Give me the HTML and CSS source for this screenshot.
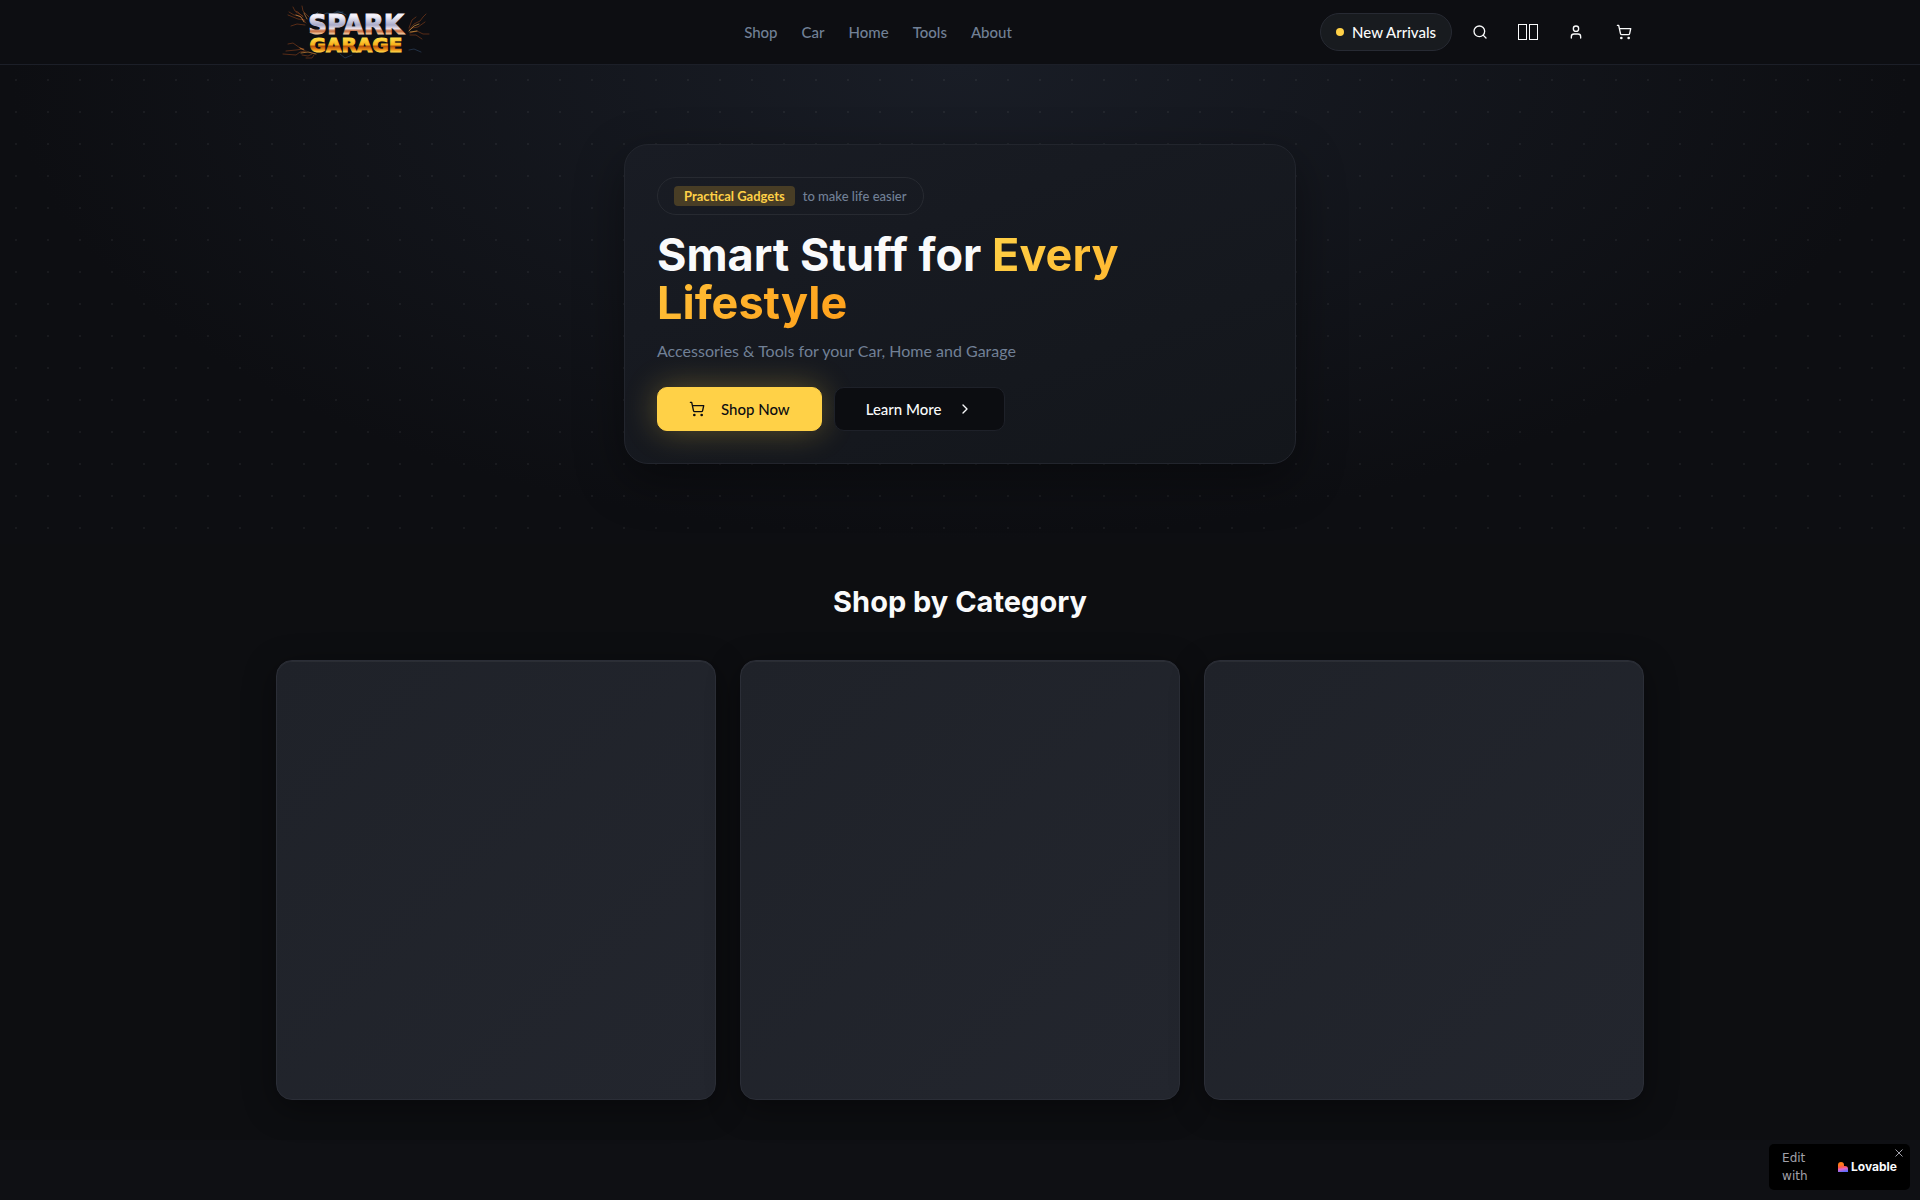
FILE: index.html
```
<!DOCTYPE html>
<html lang="en">
<head>
  <meta charset="UTF-8" />
  <meta name="viewport" content="width=device-width, initial-scale=1.0"/>
  <title>Spark Garage</title>
  <link rel="stylesheet" href="styles.css">
</head>
<body>
  <header class="header">
    <div class="container header-inner">
      <a class="logo" href="#" aria-label="Spark Garage">
        <svg width="160" height="56" viewBox="0 0 160 56">
          <defs>
            <linearGradient id="steel" x1="0" y1="0" x2="0" y2="1">
              <stop offset="0.2" stop-color="#f4f2fb"/>
              <stop offset="0.5" stop-color="#a9abc9"/>
              <stop offset="0.62" stop-color="#e9dfe6"/>
              <stop offset="0.7" stop-color="#c4693a"/>
              <stop offset="0.8" stop-color="#f3c9a0"/>
            </linearGradient>
            <linearGradient id="gold" x1="0" y1="0" x2="0" y2="1">
              <stop offset="0.2" stop-color="#ffe04a"/>
              <stop offset="0.48" stop-color="#f9b21c"/>
              <stop offset="0.56" stop-color="#b9560d"/>
              <stop offset="0.68" stop-color="#e98a14"/>
              <stop offset="0.8" stop-color="#ffd94a"/>
            </linearGradient>
          </defs>
          <g fill="none" stroke-linecap="round" stroke-width="0.6">
            <g stroke="#b5521f" opacity="0.75">
              <path d="M30 19L24 12L18 11L13 8M29 16L22 15L12 11M27 13L22 8L19 7L17 3M33 13L27 7L26 2M29 21L21 20L15 22M27 12L20 8"/>
              <path d="M133 26L138 20L144 17L147 13L150 10M134 29L141 27L147 30L153 30M136 24L142 23L149 18M133 24L136 16L140 13M134 31L140 31L146 35"/>
              <path d="M28 45L24 44L17 39L12 40M30 47L24 48L20 51L7 50M36 50L32 52L26 51M27 45L20 46L10 47M38 51L36 54L30 54"/>
            </g>
            <path stroke="#f0a050" d="M28 18L25 13L20 11M31 15L28 9"/>
            <path stroke="#3f6a93" opacity="0.8" d="M44 12L51 9L56 10L62 7L70 11M60 9L67 8M38 12L42 8"/>
            <path stroke="#f5b04a" d="M133 27L138 22L143 20M134 28L141 27"/>
            <path stroke="#f5a040" d="M40 50L32 48L25 49M28 46L24 44"/>
            <path stroke="#39577c" opacity="0.8" d="M133 46L138 45L145 48M64 50L69 54L76 51"/>
          </g>
          <text class="logo-top" x="80" y="30" text-anchor="middle" fill="url(#steel)" stroke="url(#steel)">SPARK</text>
          <text class="logo-bottom" x="80" y="48" text-anchor="middle" fill="url(#gold)" stroke="url(#gold)">GARAGE</text>
        </svg>
      </a>

      <nav class="nav">
        <a href="#">Shop</a>
        <a href="#">Car</a>
        <a href="#">Home</a>
        <a href="#">Tools</a>
        <a href="#">About</a>
      </nav>

      <div class="actions">
        <a class="arrivals" href="#"><span class="dot"></span>New Arrivals</a>
        <button class="icon-btn" aria-label="Search">
          <svg class="icon" viewBox="0 0 24 24"><circle cx="11" cy="11" r="8"/><path d="m21 21-4.3-4.3"/></svg>
        </button>
        <button class="icon-btn" aria-label="Region">
          <svg width="20" height="16" viewBox="0 0 20 16" fill="none" stroke="currentColor"><rect x="0.5" y="0.5" width="8" height="15"/><rect x="11.5" y="0.5" width="8" height="15"/></svg>
        </button>
        <button class="icon-btn" aria-label="Account">
          <svg class="icon" viewBox="0 0 24 24"><path d="M19 21v-2a4 4 0 0 0-4-4H9a4 4 0 0 0-4 4v2"/><circle cx="12" cy="7" r="4"/></svg>
        </button>
        <button class="icon-btn" aria-label="Cart">
          <svg class="icon" viewBox="0 0 24 24"><circle cx="8" cy="21" r="1"/><circle cx="19" cy="21" r="1"/><path d="M2.05 2.05h2l2.66 12.42a2 2 0 0 0 2 1.58h9.78a2 2 0 0 0 1.95-1.57l1.65-7.43H5.12"/></svg>
        </button>
      </div>
    </div>
  </header>

  <main>
    <section class="hero">
      <div class="hero-card">
        <div class="badge"><span class="badge-tag">Practical Gadgets</span>to make life easier</div>
        <h1>Smart Stuff for <span class="accent">Every Lifestyle</span></h1>
        <p>Accessories &amp; Tools for your Car, Home and Garage</p>
        <div class="buttons">
          <button class="btn btn-primary">
            <svg class="icon" viewBox="0 0 24 24"><circle cx="8" cy="21" r="1"/><circle cx="19" cy="21" r="1"/><path d="M2.05 2.05h2l2.66 12.42a2 2 0 0 0 2 1.58h9.78a2 2 0 0 0 1.95-1.57l1.65-7.43H5.12"/></svg>
            Shop Now
          </button>
          <button class="btn btn-dark">
            Learn More
            <svg class="icon" viewBox="0 0 24 24"><path d="m9 18 6-6-6-6"/></svg>
          </button>
        </div>
      </div>
    </section>

    <section class="categories">
      <div class="container">
        <h2>Shop by Category</h2>
        <div class="grid">
          <div class="category"></div>
          <div class="category"></div>
          <div class="category"></div>
        </div>
      </div>
    </section>
  </main>

  <aside class="edit-badge">
    <a href="#">
      <span class="edit-text">Edit with</span>
      <svg width="10" height="10" viewBox="0 0 10 10">
        <defs>
          <linearGradient id="heart" x1="0.3" y1="0" x2="0.5" y2="1">
            <stop offset="0.25" stop-color="#ff7a1a"/>
            <stop offset="0.5" stop-color="#ff5a4e"/>
            <stop offset="0.7" stop-color="#e065c8"/>
            <stop offset="1" stop-color="#5a6cff"/>
          </linearGradient>
        </defs>
        <path fill="url(#heart)" d="M0 3a3 3 0 0 1 6 0v1h1a3 3 0 0 1 3 3v3H0z"/>
      </svg>
      <span class="edit-brand">Lovable</span>
    </a>
    <button class="edit-close" aria-label="Close">
      <svg width="8" height="8" viewBox="0 0 8 8" stroke="currentColor"><path d="M0.5 0.5l7 7M7.5 0.5l-7 7"/></svg>
    </button>
  </aside>
</body>
</html>
```
FILE: styles.css
```
* {
  box-sizing: border-box;
}

body {
  margin: 0;
  min-height: 100vh;
  font-family: Lato, sans-serif;
  font-size: 16px;
  line-height: 24px;
  color: #f9fafb;
  background: #0f1014;
}

a {
  color: inherit;
  text-decoration: none;
}

button {
  font: inherit;
  color: inherit;
  cursor: pointer;
}

.container {
  max-width: 1400px;
  margin: 0 auto;
  padding: 0 16px;
}

.icon {
  width: 16px;
  height: 16px;
  fill: none;
  stroke: currentColor;
  stroke-width: 2;
  stroke-linecap: round;
  stroke-linejoin: round;
}

/* header */
.header {
  background: #0d0e12;
  box-shadow: 0 1px 0 #1c1f28;
  position: sticky;
  top: 0;
  z-index: 10;
}

.header-inner {
  display: flex;
  align-items: center;
  justify-content: space-between;
  height: 64px;
}

.logo svg {
  display: block;
}

.logo text {
  font-family: "DejaVu Sans", sans-serif;
  font-weight: bold;
  stroke-width: 1;
}

.logo-top {
  font-size: 26px;
}

.logo-bottom {
  font-size: 20px;
}

.nav {
  display: flex;
  gap: 24px;
  font-size: 15px;
  font-weight: 500;
  color: #718096;
}

.nav a:hover {
  color: #f9fafb;
}

.actions {
  display: flex;
  align-items: center;
  gap: 8px;
}

.arrivals {
  display: flex;
  align-items: center;
  gap: 8px;
  padding: 8px 15px;
  border: 1px solid #272a33;
  border-radius: 19px;
  background: #181b1f;
  font-size: 15px;
  font-weight: 500;
  line-height: 20px;
}

.dot {
  width: 8px;
  height: 8px;
  border-radius: 50%;
  background: #ffd147;
}

.icon-btn {
  display: flex;
  align-items: center;
  justify-content: center;
  width: 40px;
  height: 40px;
  padding: 0;
  border: none;
  border-radius: 10px;
  background: none;
}

/* hero */
.hero {
  padding: 80px 16px;
  background:
    radial-gradient(circle at 16px 16px, rgba(255, 255, 255, 0.05) 1px, transparent 1px) 0 0 / 32px 32px,
    radial-gradient(ellipse at top, #191d26 0%, #0d0e12 70%);
}

.hero-card {
  max-width: 672px;
  margin: 0 auto;
  padding: 32px;
  border: 1px solid #22252d;
  border-radius: 24px;
  background: linear-gradient(160deg, #191c24, #13161b);
  box-shadow: 0 16px 48px rgba(0, 0, 0, 0.4);
}

.badge {
  display: inline-flex;
  align-items: center;
  gap: 8px;
  padding: 8px 16px;
  border: 1px solid #272a31;
  border-radius: 19px;
  font-size: 13px;
  font-weight: 500;
  line-height: 20px;
  color: #718096;
}

.badge-tag {
  padding: 0 10px;
  border-radius: 4px;
  background: #483d25;
  color: #ffd147;
  font-weight: bold;
}

h1 {
  margin: 16px 0 12px;
  font-family: Inter, sans-serif;
  font-size: 45px;
  font-weight: 700;
  line-height: 48px;
}

.accent {
  background: linear-gradient(135deg, #ffd147, #ff9f1a);
  -webkit-background-clip: text;
  background-clip: text;
  color: transparent;
}

.hero-card p {
  margin: 0 0 24px;
  color: #718096;
}

.buttons {
  display: flex;
  flex-wrap: wrap;
  gap: 12px;
}

.btn {
  display: flex;
  align-items: center;
  gap: 16px;
  height: 44px;
  padding: 0 31px;
  border: 1px solid #1e2129;
  border-radius: 10px;
  font-size: 15px;
  font-weight: 500;
}

.btn-primary {
  border-color: #ffd147;
  background: #ffd147;
  color: #0c0d11;
  box-shadow: 0 0 32px rgba(255, 209, 71, 0.3);
}

.btn-dark {
  background: #0c0d11;
}

/* categories */
.categories {
  padding: 40px 0;
  background: #0d0e11;
}

h2 {
  margin: 0 0 40px;
  font-family: Inter, sans-serif;
  font-size: 29px;
  font-weight: 700;
  line-height: 36px;
  text-align: center;
}

.grid {
  display: grid;
  grid-template-columns: repeat(3, 1fr);
  gap: 24px;
}

.category {
  aspect-ratio: 1;
  border: 1px solid #2b2e37;
  border-radius: 16px;
  background: linear-gradient(135deg, #1f2229, #23262e);
  box-shadow: 0 8px 32px rgba(0, 0, 0, 0.4), inset 0 1px 0 rgba(255, 255, 255, 0.05);
}

/* floating badge */
.edit-badge {
  position: fixed;
  right: 10px;
  bottom: 10px;
  z-index: 20;
  border-radius: 5px;
  background: #000;
}

.edit-badge a {
  display: flex;
  align-items: center;
  padding: 5px 13px;
}

.edit-text {
  width: 56px;
  padding-right: 24px;
  font-family: "DejaVu Sans", sans-serif;
  font-size: 12px;
  line-height: 18px;
  color: #a1a1aa;
}

.edit-brand {
  margin-left: 3px;
  font-family: Inter, sans-serif;
  font-size: 12px;
  font-weight: 700;
}

.edit-close {
  position: absolute;
  top: 4px;
  right: 6px;
  display: flex;
  padding: 1px;
  border: none;
  background: none;
  color: #a1a1aa;
}

@media (max-width: 900px) {
  .nav {
    display: none;
  }

  .grid {
    grid-template-columns: 1fr;
  }
}
```
